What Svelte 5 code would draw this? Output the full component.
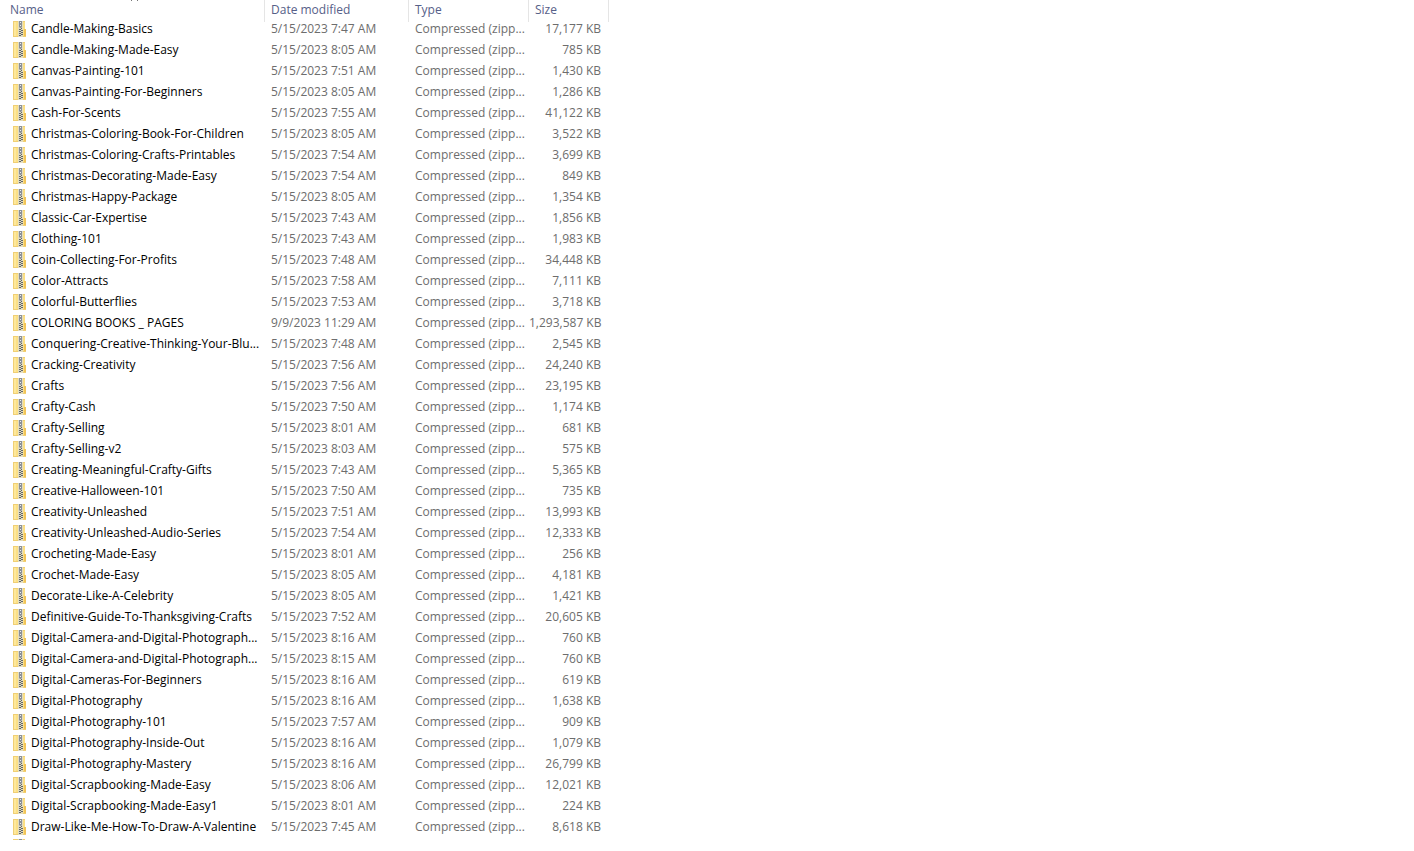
<script lang="ts">
	type Row = [name: string, modified: string, size: string];

	const type = 'Compressed (zipp...';

	const files: Row[] = [
		['Candle-Making-Basics', '5/15/2023 7:47 AM', '17,177 KB'],
		['Candle-Making-Made-Easy', '5/15/2023 8:05 AM', '785 KB'],
		['Canvas-Painting-101', '5/15/2023 7:51 AM', '1,430 KB'],
		['Canvas-Painting-For-Beginners', '5/15/2023 8:05 AM', '1,286 KB'],
		['Cash-For-Scents', '5/15/2023 7:55 AM', '41,122 KB'],
		['Christmas-Coloring-Book-For-Children', '5/15/2023 8:05 AM', '3,522 KB'],
		['Christmas-Coloring-Crafts-Printables', '5/15/2023 7:54 AM', '3,699 KB'],
		['Christmas-Decorating-Made-Easy', '5/15/2023 7:54 AM', '849 KB'],
		['Christmas-Happy-Package', '5/15/2023 8:05 AM', '1,354 KB'],
		['Classic-Car-Expertise', '5/15/2023 7:43 AM', '1,856 KB'],
		['Clothing-101', '5/15/2023 7:43 AM', '1,983 KB'],
		['Coin-Collecting-For-Profits', '5/15/2023 7:48 AM', '34,448 KB'],
		['Color-Attracts', '5/15/2023 7:58 AM', '7,111 KB'],
		['Colorful-Butterflies', '5/15/2023 7:53 AM', '3,718 KB'],
		['COLORING BOOKS _ PAGES', '9/9/2023 11:29 AM', '1,293,587 KB'],
		['Conquering-Creative-Thinking-Your-Blu...', '5/15/2023 7:48 AM', '2,545 KB'],
		['Cracking-Creativity', '5/15/2023 7:56 AM', '24,240 KB'],
		['Crafts', '5/15/2023 7:56 AM', '23,195 KB'],
		['Crafty-Cash', '5/15/2023 7:50 AM', '1,174 KB'],
		['Crafty-Selling', '5/15/2023 8:01 AM', '681 KB'],
		['Crafty-Selling-v2', '5/15/2023 8:03 AM', '575 KB'],
		['Creating-Meaningful-Crafty-Gifts', '5/15/2023 7:43 AM', '5,365 KB'],
		['Creative-Halloween-101', '5/15/2023 7:50 AM', '735 KB'],
		['Creativity-Unleashed', '5/15/2023 7:51 AM', '13,993 KB'],
		['Creativity-Unleashed-Audio-Series', '5/15/2023 7:54 AM', '12,333 KB'],
		['Crocheting-Made-Easy', '5/15/2023 8:01 AM', '256 KB'],
		['Crochet-Made-Easy', '5/15/2023 8:05 AM', '4,181 KB'],
		['Decorate-Like-A-Celebrity', '5/15/2023 8:05 AM', '1,421 KB'],
		['Definitive-Guide-To-Thanksgiving-Crafts', '5/15/2023 7:52 AM', '20,605 KB'],
		['Digital-Camera-and-Digital-Photograph...', '5/15/2023 8:16 AM', '760 KB'],
		['Digital-Camera-and-Digital-Photograph...', '5/15/2023 8:15 AM', '760 KB'],
		['Digital-Cameras-For-Beginners', '5/15/2023 8:16 AM', '619 KB'],
		['Digital-Photography', '5/15/2023 8:16 AM', '1,638 KB'],
		['Digital-Photography-101', '5/15/2023 7:57 AM', '909 KB'],
		['Digital-Photography-Inside-Out', '5/15/2023 8:16 AM', '1,079 KB'],
		['Digital-Photography-Mastery', '5/15/2023 8:16 AM', '26,799 KB'],
		['Digital-Scrapbooking-Made-Easy', '5/15/2023 8:06 AM', '12,021 KB'],
		['Digital-Scrapbooking-Made-Easy1', '5/15/2023 8:01 AM', '224 KB'],
		['Draw-Like-Me-How-To-Draw-A-Valentine', '5/15/2023 7:45 AM', '8,618 KB']
	];
</script>

{#snippet zip()}
	<svg width="13" height="16" viewBox="0 0 13 16" aria-hidden="true">
		<path d="M0 0h12v8h1v8H0z" fill="#fbdf85" />
		<path d="M0 0h1v16H0zM0 0h12v1H0zM0 15h13v1H0z" fill="#f0cf74" />
		<path d="M1 1h2v14H1z" fill="#fde89c" />
		<path d="M11 8h2v7h-2z" fill="#f2c458" />
		<path d="M5 0h5v16H5z" fill="#e2dcc0" />
		<path d="M6 0h3v6l-1 1H7L6 6z" fill="#8b9097" />
		<path d="M7 1h1v1H7zM7 4h1v1H7z" fill="#eceef0" />
		<path d="M8 7h1v1H8zM6 8h2v1H6zM8 9h2v1H8zM6 10h2v1H6zM8 11h2v1H8zM6 12h2v1H6zM8 13h2v1H8zM6 14h2v1H6z" fill="#62676a" />
	</svg>
{/snippet}

<table>
	<colgroup>
		<col class="name" />
		<col class="date" />
		<col class="type" />
		<col class="size" />
	</colgroup>
	<thead>
		<tr>
			<th scope="col" aria-sort="ascending">
				Name
				<svg class="sort" width="9" height="2" viewBox="0 0 9 2" aria-hidden="true">
					<path d="M1 0l1 1M8 0L7 1" stroke="#777" fill="none" />
				</svg>
			</th>
			<th scope="col">Date modified</th>
			<th scope="col">Type</th>
			<th scope="col">Size</th>
		</tr>
	</thead>
	<tbody>
		{#each files as [name, modified, size]}
			<tr>
				<td><div class="file">{@render zip()}<span>{name}</span></div></td>
				<td>{modified}</td>
				<td>{type}</td>
				<td>{size}</td>
			</tr>
		{/each}
	</tbody>
</table>
<div class="cut">{@render zip()}</div>

<style>
	:global(body) {
		margin: 0;
		background: #fff;
	}
	table {
		table-layout: fixed;
		width: 609px;
		border-collapse: collapse;
		font: 12px/20px 'Open Sans', 'Noto Sans', sans-serif;
		color: #6d6d6d;
	}
	.name {
		width: 265px;
	}
	.date {
		width: 144px;
	}
	.type {
		width: 120px;
	}
	th,
	td {
		padding: 0 6px;
		text-align: left;
		white-space: nowrap;
	}
	/* the header hangs a little way over the first row */
	th {
		position: relative;
		padding-top: 2px;
		line-height: 16px;
		font-weight: 400;
		color: #566088;
		box-shadow: 0 4px #fff;
	}
	th::after {
		content: '';
		position: absolute;
		top: 0;
		right: 0;
		width: 1px;
		height: 22px;
		background: #e5e5e5;
	}
	th:first-child {
		padding-left: 10px;
	}
	.sort {
		position: absolute;
		top: 0;
		left: 130px;
	}
	td {
		height: 21px;
	}
	td:first-child {
		padding: 0 0 0 13px;
		color: #000;
	}
	td:last-child {
		padding: 0 8px 0 0;
		text-align: right;
	}
	.file {
		display: flex;
		align-items: center;
		gap: 5px;
	}
	svg {
		display: block;
		flex: none;
	}
	.cut {
		height: 1px;
		margin: 2px 0 0 13px;
		overflow: hidden;
	}
</style>
